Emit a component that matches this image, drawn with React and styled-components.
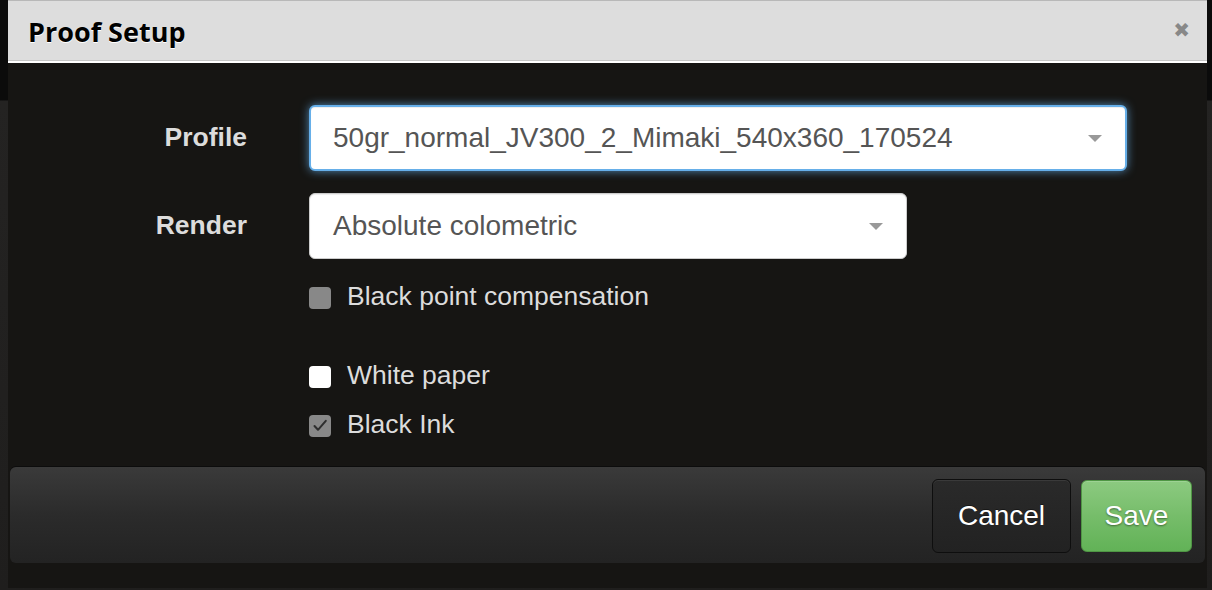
import React from "react";
import styled, { createGlobalStyle } from "styled-components";

const Global = createGlobalStyle`
  html, body {
    margin: 0;
    padding: 0;
    background: #1d1c1b;
    font-family: "Liberation Sans", Arial, sans-serif;
  }
`;

const Backdrop = styled.div`
  width: 1212px;
  height: 590px;
  overflow: hidden;
  background:
    linear-gradient(180deg, #0b0b0b 0px, #0b0b0b 100px, #242322 101px, #1f1e1d 100%);
`;

const Modal = styled.div`
  margin-left: 8px;
  width: 1199px;
  height: 588px;
  border-top: 1px solid #b8b8b8;
  background: #161513;
  display: flex;
  flex-direction: column;
  box-sizing: border-box;
`;

const Header = styled.div`
  height: 62px;
  flex: none;
  box-sizing: border-box;
  background: #dddddd;
  box-shadow: inset 0 -2px 0 #ffffff, inset 0 -3px 0 #c6c6c6;
  display: flex;
  align-items: center;
  justify-content: space-between;
  padding: 0 17px 3px 20px;
`;

const Title = styled.h3`
  margin: 0;
  font-family: "Open Sans", "DejaVu Sans", sans-serif;
  font-weight: 700;
  font-size: 27px;
  color: #000;
  text-shadow: 0 1px 0 #fff;
  margin-top: 2px;
`;

const Close = styled.span`
  font-family: "DejaVu Sans", sans-serif;
  font-weight: 700;
  font-size: 20px;
  color: #888;
  line-height: 1;
  margin-top: -2px;
`;

const Body = styled.div`
  flex: 1;
  padding-top: 42px;
  display: flex;
  flex-direction: column;
`;

const Row = styled.div`
  display: flex;
  align-items: center;
  margin-bottom: ${(p) => p.$mb || 0}px;
`;

const Label = styled.label`
  width: 239px;
  margin-right: 62px;
  text-align: right;
  font-weight: 700;
  font-size: 26.5px;
  color: #dcdcdc;
  flex: none;
  margin-top: -2px;
`;

const Spacer = styled.div`
  width: 301px;
  flex: none;
`;

const Select = styled.div`
  position: relative;
  box-sizing: border-box;
  width: ${(p) => p.$w}px;
  height: 66px;
  background: #fff;
  border-radius: 6px;
  border: ${(p) => (p.$focus ? "2px solid #66afe9" : "1px solid #cccccc")};
  box-shadow: ${(p) =>
    p.$focus
      ? "0 0 10px rgba(102, 175, 233, 0.75), inset 0 1px 1px rgba(0,0,0,0.075)"
      : "inset 0 1px 1px rgba(0,0,0,0.075)"};
  display: flex;
  align-items: center;
  padding-left: ${(p) => (p.$focus ? 22 : 23)}px;
  font-size: 28px;
  color: #555;
`;

const Caret = styled.span`
  position: absolute;
  right: 23px;
  top: 50%;
  margin-top: -3px;
  width: 0;
  height: 0;
  border-left: 7px solid transparent;
  border-right: 7px solid transparent;
  border-top: 7px solid #999;
`;

const Box = styled.span`
  width: 22px;
  height: 22px;
  border-radius: 4px;
  box-sizing: border-box;
  background: ${(p) => (p.$white ? "#ffffff" : "#888888")};
  margin-right: 16px;
  flex: none;
  display: flex;
  align-items: center;
  justify-content: center;
`;

const CheckText = styled.span`
  font-size: 26.5px;
  color: #dcdcdc;
  margin-top: -2px;
`;

const Footer = styled.div`
  margin: 0 2px 25px 2px;
  height: 96px;
  box-sizing: border-box;
  border-radius: 6px;
  background: linear-gradient(180deg, #3a3a3a 0%, #2b2b2b 50%, #232323 100%);
  box-shadow: 0 -1px 0 #0c0c0c;
  display: flex;
  align-items: center;
  justify-content: flex-end;
  gap: 10px;
  padding: 2px 13px 0 0;
`;

const Button = styled.button`
  box-sizing: border-box;
  height: ${(p) => (p.$primary ? 72 : 74)}px;
  width: ${(p) => (p.$primary ? 111 : 139)}px;
  border-radius: 6px;
  font-family: "Liberation Sans", Arial, sans-serif;
  font-size: 28px;
  color: #fff;
  border: 1px solid ${(p) => (p.$primary ? "#4f9644" : "#0e0e0e")};
  background: ${(p) =>
    p.$primary
      ? "linear-gradient(180deg, #8cca80 0%, #76bd6a 50%, #62b257 100%)"
      : "linear-gradient(180deg, #2a2a2a 0%, #222 100%)"};
  box-shadow: ${(p) =>
    p.$primary
      ? "inset 0 1px 0 rgba(255,255,255,0.15)"
      : "inset 0 1px 0 rgba(255,255,255,0.08)"};
  text-shadow: ${(p) => (p.$primary ? "0 1px 2px rgba(0,0,0,0.45)" : "0 -1px 0 rgba(0,0,0,0.4)")};
  padding: 0;
`;

function Check() {
  return (
    <svg width="16" height="14" viewBox="0 0 16 14" style={{ display: "block" }}>
      <path
        d="M2.5 7 L6 10.8 L13.8 1.8"
        fill="none"
        stroke="#2e2e2e"
        strokeWidth="2"
        strokeLinecap="round"
        strokeLinejoin="round"
      />
    </svg>
  );
}

export default function App() {
  return (
    <Backdrop>
      <Global />
      <Modal>
        <Header>
          <Title>Proof Setup</Title>
          <Close>✖</Close>
        </Header>
        <Body>
          <Row $mb={22}>
            <Label>Profile</Label>
            <Select $w={818} $focus>
              50gr_normal_JV300_2_Mimaki_540x360_170524
              <Caret />
            </Select>
          </Row>
          <Row $mb={24}>
            <Label>Render</Label>
            <Select $w={598}>
              Absolute colometric
              <Caret />
            </Select>
          </Row>
          <Row $mb={50}>
            <Spacer />
            <Box />
            <CheckText>Black point compensation</CheckText>
          </Row>
          <Row $mb={20}>
            <Spacer />
            <Box $white />
            <CheckText>White paper</CheckText>
          </Row>
          <Row>
            <Spacer />
            <Box>
              <Check />
            </Box>
            <CheckText>Black Ink</CheckText>
          </Row>
        </Body>
        <Footer>
          <Button>Cancel</Button>
          <Button $primary>Save</Button>
        </Footer>
      </Modal>
    </Backdrop>
  );
}
